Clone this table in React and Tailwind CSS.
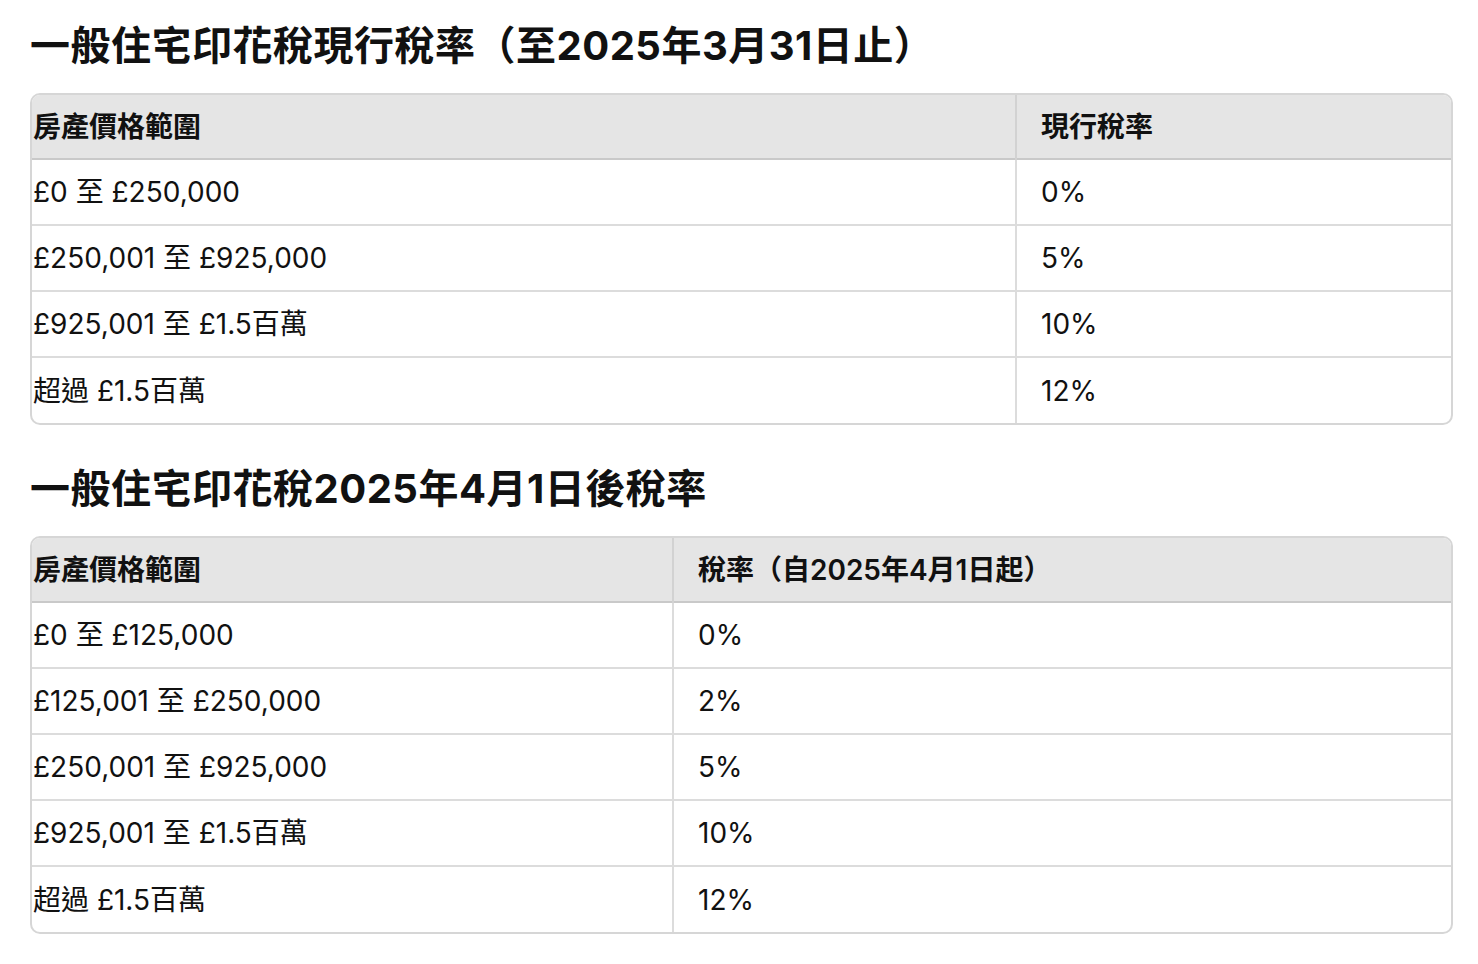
import React from 'react';

const font = { fontFamily: '"Inter", "Noto Sans CJK TC", sans-serif' };

const RateTable = ({ head, rows, firstCol }) => {
  return (
    <div className="ml-[30px] w-[1423px] rounded-[10px] border-2 border-[#d6d6d6] overflow-hidden">
      <table className="w-full border-collapse table-fixed text-[28px] text-[#111]">
        <colgroup>
          <col className={firstCol} />
          <col />
        </colgroup>
        <thead>
          <tr className="h-[64px] bg-[#e5e5e5] border-b-2 border-[#c9c9c9]">
            <th className="text-left font-semibold pl-[1px]">{head[0]}</th>
            <th className="text-left font-semibold pl-[24px] border-l-2 border-[#d2d2d2]">{head[1]}</th>
          </tr>
        </thead>
        <tbody>
          {rows.map((r, i) => (
            <tr key={i} className={"h-[66px] " + (i < rows.length - 1 ? "border-b-2 border-[#dcdcdc]" : "")}>
              <td className="pl-[1px]">{r[0]}</td>
              <td className="pl-[24px] border-l-2 border-[#dcdcdc]">{r[1]}</td>
            </tr>
          ))}
        </tbody>
      </table>
    </div>
  );
};

const App = () => {
  const current = [
    ['£0 至 £250,000', '0%'],
    ['£250,001 至 £925,000', '5%'],
    ['£925,001 至 £1.5百萬', '10%'],
    ['超過 £1.5百萬', '12%'],
  ];
  const after = [
    ['£0 至 £125,000', '0%'],
    ['£125,001 至 £250,000', '2%'],
    ['£250,001 至 £925,000', '5%'],
    ['£925,001 至 £1.5百萬', '10%'],
    ['超過 £1.5百萬', '12%'],
  ];

  return (
    <div className="min-h-screen bg-white pt-[20px] text-[#111]" style={font}>
      <h2 className="ml-[30px] text-[40px] font-bold leading-[52px] tracking-[0.5px]">一般住宅印花稅現行稅率（至2025年3月31日止）</h2>
      <div className="mt-[21px]">
        <RateTable head={['房產價格範圍', '現行稅率']} rows={current} firstCol="w-[984px]" />
      </div>
      <h2 className="ml-[30px] mt-[38px] text-[40px] font-bold leading-[52px] tracking-[0.5px]">一般住宅印花稅2025年4月1日後稅率</h2>
      <div className="mt-[21px]">
        <RateTable head={['房產價格範圍', '稅率（自2025年4月1日起）']} rows={after} firstCol="w-[641px]" />
      </div>
    </div>
  );
};

export default App;
